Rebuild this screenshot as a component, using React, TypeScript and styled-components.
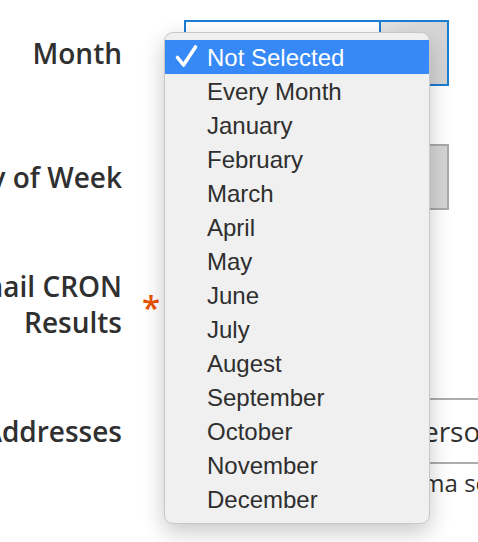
import styled, { createGlobalStyle } from "styled-components";

const months = [
  "Not Selected",
  "Every Month",
  "January",
  "February",
  "March",
  "April",
  "May",
  "June",
  "July",
  "Augest",
  "September",
  "October",
  "November",
  "December",
];

const GlobalStyle = createGlobalStyle`
  html, body {
    margin: 0;
    padding: 0;
    background: #ffffff;
    overflow: hidden;
  }
  body {
    width: 478px;
    height: 542px;
  }
`;

export default function App() {
  return (
    <>
      <GlobalStyle />
      <Form>
        <Label>Month</Label>
        <Required />
        <Control>
          <Select $focused>
            <SelectValue />
            <SelectButton $focused />
          </Select>
          <Dropdown>
            {months.map((m, i) => (
              <Option key={m} $selected={i === 0}>
                {i === 0 && (
                  <Check viewBox="0 0 24 24">
                    <path d="M3.5 13.5 L9.5 21 L21.5 3" />
                  </Check>
                )}
                {m}
              </Option>
            ))}
          </Dropdown>
        </Control>

        <Label>Day of Week</Label>
        <Required />
        <Control>
          <Select>
            <SelectValue />
            <SelectButton />
          </Select>
        </Control>

        <Label>
          Email CRON
          <br />
          Results
        </Label>
        <Required>*</Required>
        <Control>
          <Toggle />
        </Control>

        <Label>Email Addresses</Label>
        <Required />
        <Control>
          <TextInput>info@site.com, person@site.com</TextInput>
          <Note>Multiple e-mails, comma separated</Note>
        </Control>
      </Form>
    </>
  );
}

const Form = styled.div`
  display: grid;
  grid-template-columns: 122px 62px 1fr;
  row-gap: 58px;
  align-items: center;
  padding-top: 20px;
  font-family: "Open Sans", "Liberation Sans", sans-serif;
  color: #303030;
`;

const Label = styled.div`
  display: flex;
  justify-content: flex-end;
  text-align: right;
  white-space: nowrap;
  font-size: 28px;
  font-weight: 600;
  line-height: 36px;
  color: #303030;
`;

const Required = styled.div`
  padding-left: 20px;
  padding-top: 8px;
  font-size: 33px;
  font-weight: 600;
  line-height: 34px;
  color: #eb5202;
`;

const Control = styled.div`
  position: relative;
  min-height: 66px;
  display: flex;
  flex-direction: column;
  justify-content: center;
`;

const Select = styled.div<{ $focused?: boolean }>`
  box-sizing: border-box;
  width: 265px;
  height: 66px;
  display: grid;
  grid-template-columns: 1fr 68px;
  border: 2px solid ${(p) => (p.$focused ? "#1a7cd3" : "#a9a9a9")};
  background: #ffffff;
`;

const SelectValue = styled.div`
  background: #ffffff;
`;

const SelectButton = styled.div<{ $focused?: boolean }>`
  border-left: 2px solid ${(p) => (p.$focused ? "#1a7cd3" : "#a9a9a9")};
  background: linear-gradient(to right, #e4e4e4, #d4d4d4);
`;

const Toggle = styled.div`
  width: 90px;
  height: 44px;
  border-radius: 22px;
  background: #e3e3e3;
  border: 2px solid #adadad;
`;

const TextInput = styled.div`
  box-sizing: border-box;
  width: 340px;
  height: 66px;
  border: 2px solid #adadad;
  padding: 0 20px;
  display: flex;
  align-items: center;
  white-space: nowrap;
  overflow: hidden;
  font-size: 28px;
  color: #303030;
`;

const Note = styled.div`
  position: absolute;
  top: 70px;
  left: 0;
  white-space: nowrap;
  font-size: 24px;
  line-height: 30px;
  color: #303030;
`;

const Dropdown = styled.div`
  position: absolute;
  left: -20px;
  top: 12px;
  z-index: 10;
  box-sizing: border-box;
  width: 266px;
  padding: 7px 0;
  background: #f0f0f0;
  border: 1px solid #c8c8c8;
  border-radius: 9px;
  box-shadow: 0 8px 22px rgba(0, 0, 0, 0.22);
  font-family: "Liberation Sans", Arial, sans-serif;
`;

const Option = styled.div<{ $selected?: boolean }>`
  position: relative;
  height: 34px;
  line-height: 35px;
  padding-left: 42px;
  font-size: 24px;
  white-space: nowrap;
  color: ${(p) => (p.$selected ? "#ffffff" : "#2e2e2e")};
  background: ${(p) => (p.$selected ? "#3689f6" : "transparent")};
`;

const Check = styled.svg`
  position: absolute;
  left: 9px;
  top: 4px;
  width: 24px;
  height: 24px;
  fill: none;
  stroke: #ffffff;
  stroke-width: 3.6;
  stroke-linecap: round;
  stroke-linejoin: round;
`;
